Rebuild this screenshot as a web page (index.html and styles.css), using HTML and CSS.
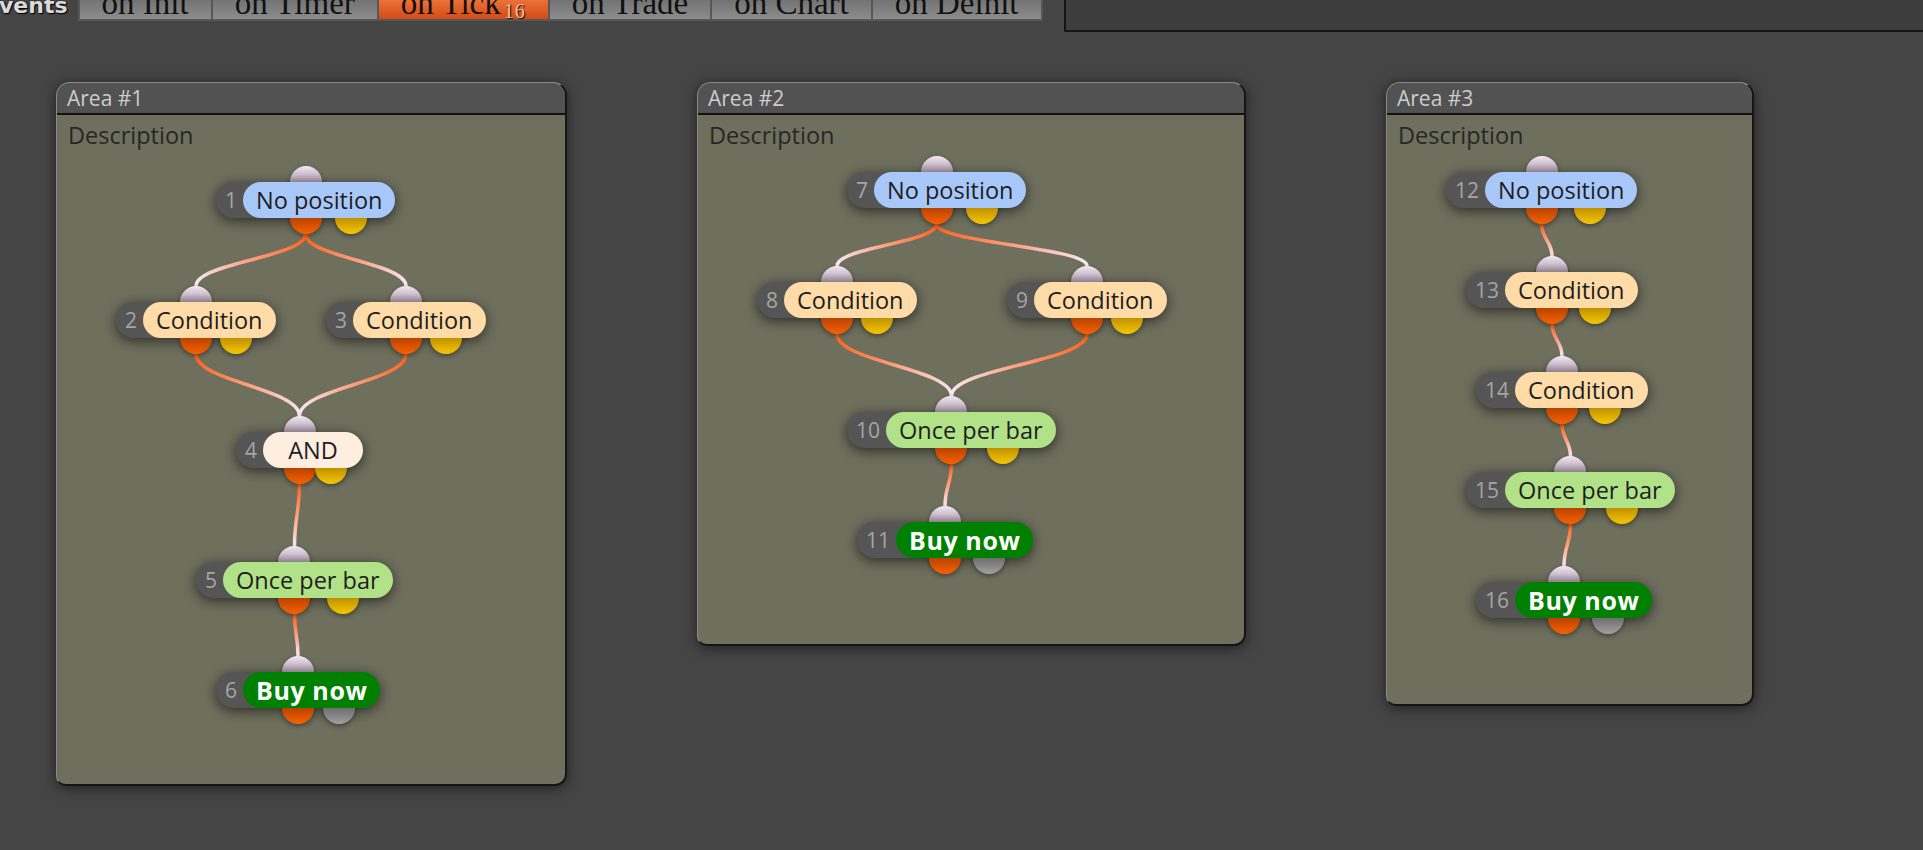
FILE: index.html
```html
<!DOCTYPE html>
<html lang="en">
  <head>
    <meta charset="UTF-8" />
    <meta name="viewport" content="width=device-width, initial-scale=1.0" />
    <title>Strategy editor</title>
    <link rel="stylesheet" href="styles.css">
  </head>
  <body>
    <div class="top">
      <div class="events">Events</div>
      <ul class="tabs">
        <li>on Init</li>
        <li>on Timer</li>
        <li class="active">on Tick<sub>16</sub></li>
        <li>on Trade</li>
        <li>on Chart</li>
        <li>on Deinit</li>
      </ul>
      <div class="props"></div>
    </div>

    <div class="canvas">
      <div class="area area-1">
        <div class="area-head">Area #1</div>
        <div class="area-desc">Description</div>
        <svg class="wires"></svg>
      </div>
      <div class="area area-2">
        <div class="area-head">Area #2</div>
        <div class="area-desc">Description</div>
        <svg class="wires"></svg>
      </div>
      <div class="area area-3">
        <div class="area-head">Area #3</div>
        <div class="area-desc">Description</div>
        <svg class="wires"></svg>
      </div>
    </div>

    <script>
      // [id, x, y, type, text]  (x, y inside the area)
      const data = [
        {
          nodes: [
            [1, 159, 99, 'pos', 'No position'],
            [2, 59, 219, 'cond', 'Condition'],
            [3, 269, 219, 'cond', 'Condition'],
            [4, 179, 349, 'and', 'AND'],
            [5, 139, 479, 'once', 'Once per bar'],
            [6, 159, 589, 'buy', 'Buy now'],
          ],
          links: [[1, 2], [1, 3], [2, 4], [3, 4], [4, 5], [5, 6]],
        },
        {
          nodes: [
            [7, 149, 89, 'pos', 'No position'],
            [8, 59, 199, 'cond', 'Condition'],
            [9, 309, 199, 'cond', 'Condition'],
            [10, 149, 329, 'once', 'Once per bar'],
            [11, 159, 439, 'buy', 'Buy now'],
          ],
          links: [[7, 8], [7, 9], [8, 10], [9, 10], [10, 11]],
        },
        {
          nodes: [
            [12, 59, 89, 'pos', 'No position'],
            [13, 79, 189, 'cond', 'Condition'],
            [14, 89, 289, 'cond', 'Condition'],
            [15, 79, 389, 'once', 'Once per bar'],
            [16, 89, 499, 'buy', 'Buy now'],
          ],
          links: [[12, 13], [13, 14], [14, 15], [15, 16]],
        },
      ]

      const areas = document.querySelectorAll('.area')
      const PIN = 16

      function wire(a, b) {
        const x1 = a.offsetLeft + a.offsetWidth / 2
        const y1 = a.offsetTop + a.offsetHeight + PIN
        const x2 = b.offsetLeft + b.offsetWidth / 2
        const y2 = b.offsetTop - PIN
        const d = (y2 - y1) * 0.45
        const id = `w${a.dataset.id}-${b.dataset.id}`
        return `
          <linearGradient id="${id}" gradientUnits="userSpaceOnUse" x1="${x1}" y1="${y1}" x2="${x2}" y2="${y2}">
            <stop offset="0" stop-color="#ff621c"/>
            <stop offset="0.5" stop-color="#fb9f80"/>
            <stop offset="1" stop-color="#f7e9f3"/>
          </linearGradient>
          <path d="M${x1} ${y1} C${x1} ${y1 + d} ${x2} ${y2 - d} ${x2} ${y2}" stroke="url(#${id})"/>
        `
      }

      function render() {
        for (let i = 0; i < data.length; i++) {
          const area = areas[i]
          const els = {}
          for (const [id, x, y, type, text] of data[i].nodes) {
            const div = document.createElement('div')
            div.className = 'node'
            div.dataset.id = id
            div.style.left = x + 'px'
            div.style.top = y + 'px'
            div.innerHTML = `
              <span class="pin pin-in"></span>
              <span class="num">${id}</span>
              <span class="label ${type}">${text}</span>
              <span class="pin pin-out"></span>
              <span class="pin pin-alt ${type === 'buy' ? 'pin-off' : ''}"></span>
            `
            area.appendChild(div)
            els[id] = div
          }
          let svg = ''
          for (const [a, b] of data[i].links) {
            svg += wire(els[a], els[b])
          }
          area.querySelector('.wires').innerHTML = svg
        }
      }

      render()
    </script>
  </body>
</html>
```

FILE: styles.css
```css
* {
  margin: 0;
  padding: 0;
  box-sizing: border-box;
}
body {
  height: 850px;
  overflow: hidden;
  background-color: #454545;
  font-family: "Open Sans", "Noto Sans", sans-serif;
}

/* top bar */
.top {
  display: flex;
  align-items: flex-start;
  height: 32px;
}
.events {
  margin: -5px 0 0 -16px;
  font: bold 22px/22px "DejaVu Sans", sans-serif;
  color: #dadada;
  text-shadow: 1px 1px 1px #000, 0 0 2px #111;
}
.tabs {
  display: flex;
  gap: 2px;
  list-style: none;
  margin: -13px 0 0 10px;
  padding: 0 2px 2px;
  background-color: #575757;
}
.tabs li {
  height: 32px;
  padding: 0 22px;
  font: 33px/32px "Liberation Serif", serif;
  color: #111;
  background: linear-gradient(#626262, #8c8c8c);
}
.tabs li.active {
  background: linear-gradient(#fb8a55, #d44b14);
}
.tabs sub {
  margin-left: 3px;
  font-size: 20px;
  line-height: 0;
  letter-spacing: 1px;
  vertical-align: -4px;
  color: #ecc3a0;
  text-shadow: 1px 1px 1px #000;
}
.props {
  flex: 1;
  height: 32px;
  margin: 0 -4px 0 21px;
  background-color: #3d3d3d;
  border-left: 2px solid #151515;
  border-bottom: 2px solid #151515;
}

/* areas */
.canvas {
  display: flex;
  align-items: flex-start;
  padding: 50px 0 0 56px;
}
.area {
  position: relative;
  flex: none;
  background-color: #6e6f5d;
  border: 1px solid #8a8a8a;
  border-right: 2px solid #151515;
  border-bottom: 2px solid #151515;
  border-radius: 14px 14px 12px 10px;
  box-shadow: 0 2px 14px rgba(0, 0, 0, 0.55);
}
.area-1 {
  width: 511px;
  height: 704px;
}
.area-2 {
  width: 549px;
  height: 564px;
  margin-left: 130px;
}
.area-3 {
  width: 368px;
  height: 624px;
  margin-left: 140px;
}
.area-head {
  height: 32px;
  padding-left: 10px;
  line-height: 30px;
  font-size: 21px;
  color: #cdcdcd;
  background-color: #525252;
  border-bottom: 2px solid #111;
  border-radius: 13px 13px 0 0;
}
.area-desc {
  padding: 4px 11px 0;
  font-size: 23.5px;
  line-height: 32px;
  color: #272727;
}
.wires {
  position: absolute;
  left: 0;
  top: 0;
  width: 100%;
  height: 100%;
  overflow: visible;
}
.wires path {
  fill: none;
  stroke-width: 3.5;
  stroke-linecap: round;
}

/* nodes */
.node {
  position: absolute;
  z-index: 1;
  display: flex;
  height: 36px;
  white-space: nowrap;
  background-color: #555;
  border-radius: 18px;
  box-shadow: 0 3px 13px rgba(0, 0, 0, 0.6);
}
.num {
  padding: 0 6px 0 9px;
  font-size: 21px;
  line-height: 36px;
  color: #a5a5a5;
}
.label {
  min-width: 100px;
  padding: 0 13px;
  text-align: center;
  font-size: 23.5px;
  line-height: 36px;
  color: #1e1e1e;
  border-radius: 18px;
}
.pos {
  background-color: #a9c8fa;
}
.cond {
  background-color: #ffdba8;
}
.and {
  background-color: #fdeedf;
}
.once {
  background-color: #b1e288;
}
.buy {
  font-size: 25px;
  font-weight: 700;
  letter-spacing: 0.6px;
  color: #fff;
  background-color: #008000;
}
.pin {
  position: absolute;
  z-index: -1;
  width: 32px;
  height: 32px;
  margin-left: -16px;
  border-radius: 50%;
  box-shadow: 0 2px 5px rgba(0, 0, 0, 0.4);
}
.pin-in {
  left: 50%;
  top: -16px;
  background: linear-gradient(#f2e8f2, #cfc0cf 25%, #8e7f8e 50%);
}
.pin-out {
  left: 50%;
  top: 20px;
  background: linear-gradient(#7c2e00, #b94300 50%, #f76100);
}
.pin-alt {
  left: 75%;
  top: 20px;
  background: linear-gradient(#8a6800, #bf9100 50%, #f6c600);
}
.pin-alt.pin-off {
  background: linear-gradient(#555, #6e6e6e 50%, #a0a0a0);
}
```
